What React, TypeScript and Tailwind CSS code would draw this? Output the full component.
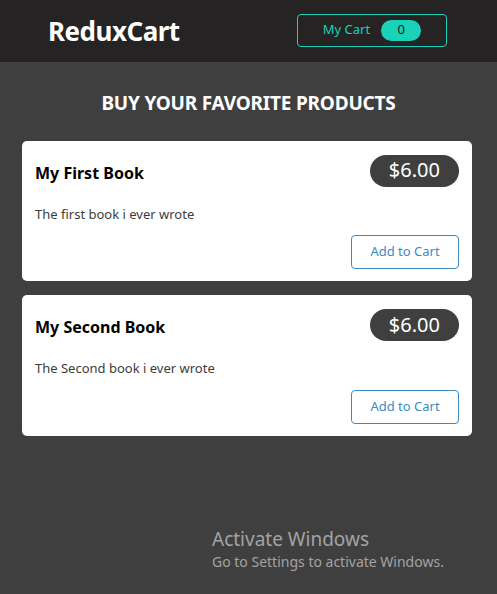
const products = [
  { id: 'p1', title: 'My First Book', price: 6, description: 'The first book i ever wrote' },
  { id: 'p2', title: 'My Second Book', price: 6, description: 'The Second book i ever wrote' },
];

const ProductItem = ({ title, price, description }: { title: string; price: number; description: string }) => (
  <li className="bg-white rounded-[5px] px-[13px] pt-[14px] pb-[12px]">
    <header className="flex items-center justify-between">
      <h3 className="text-[16px] font-bold text-black mt-[4px]">{title}</h3>
      <div className="bg-[#3f3f3f] text-white text-[20px] leading-none rounded-full px-[19px] pt-[5px] pb-[6px] h-[32px] flex items-center">
        ${price.toFixed(2)}
      </div>
    </header>
    <p className="text-[13px] text-[#3c3c3c] mt-[18px]">{description}</p>
    <div className="flex justify-end mt-[11px]">
      <button className="border border-[#3b8ac4] text-[#3b8ac4] rounded-[4px] text-[13px] w-[108px] h-[34px]">
        Add to Cart
      </button>
    </div>
  </li>
);

export default function App() {
  return (
    <div className="relative min-h-[594px] bg-[#3f3f3f]" style={{ fontFamily: '"Noto Sans", sans-serif' }}>
      <header className="h-[62px] bg-[#252323] flex items-center justify-between pl-[48px] pr-[50px]">
        <h1 className="text-[26px] font-bold text-white tracking-[-0.5px]">ReduxCart</h1>
        <button className="w-[150px] h-[33px] border border-[#1ad1b9] rounded-[4px] flex items-center justify-center gap-[11px] mt-[-2px]">
          <span className="text-[13px] text-[#1ad1b9]">My Cart</span>
          <span className="bg-[#1ad1b9] text-[#1a1a1a] text-[13px] rounded-full w-[40px] h-[21px] flex items-center justify-center">0</span>
        </button>
      </header>

      <section className="px-[22px] pt-[27px] pb-8">
        <h2 className="text-center text-white text-[19px] font-bold tracking-[-0.2px] mb-[23px]">BUY YOUR FAVORITE PRODUCTS</h2>
        <ul className="flex flex-col gap-[14px] w-[450px]">
          {products.map((p) => (
            <ProductItem key={p.id} title={p.title} price={p.price} description={p.description} />
          ))}
        </ul>
      </section>

      <div className="absolute left-[212px] top-[527px] text-[#a3a3a3] pointer-events-none">
        <p className="text-[19px] leading-[24px]">Activate Windows</p>
        <p className="text-[14px] leading-[20px] mt-[1px]">Go to Settings to activate Windows.</p>
      </div>
    </div>
  );
}
